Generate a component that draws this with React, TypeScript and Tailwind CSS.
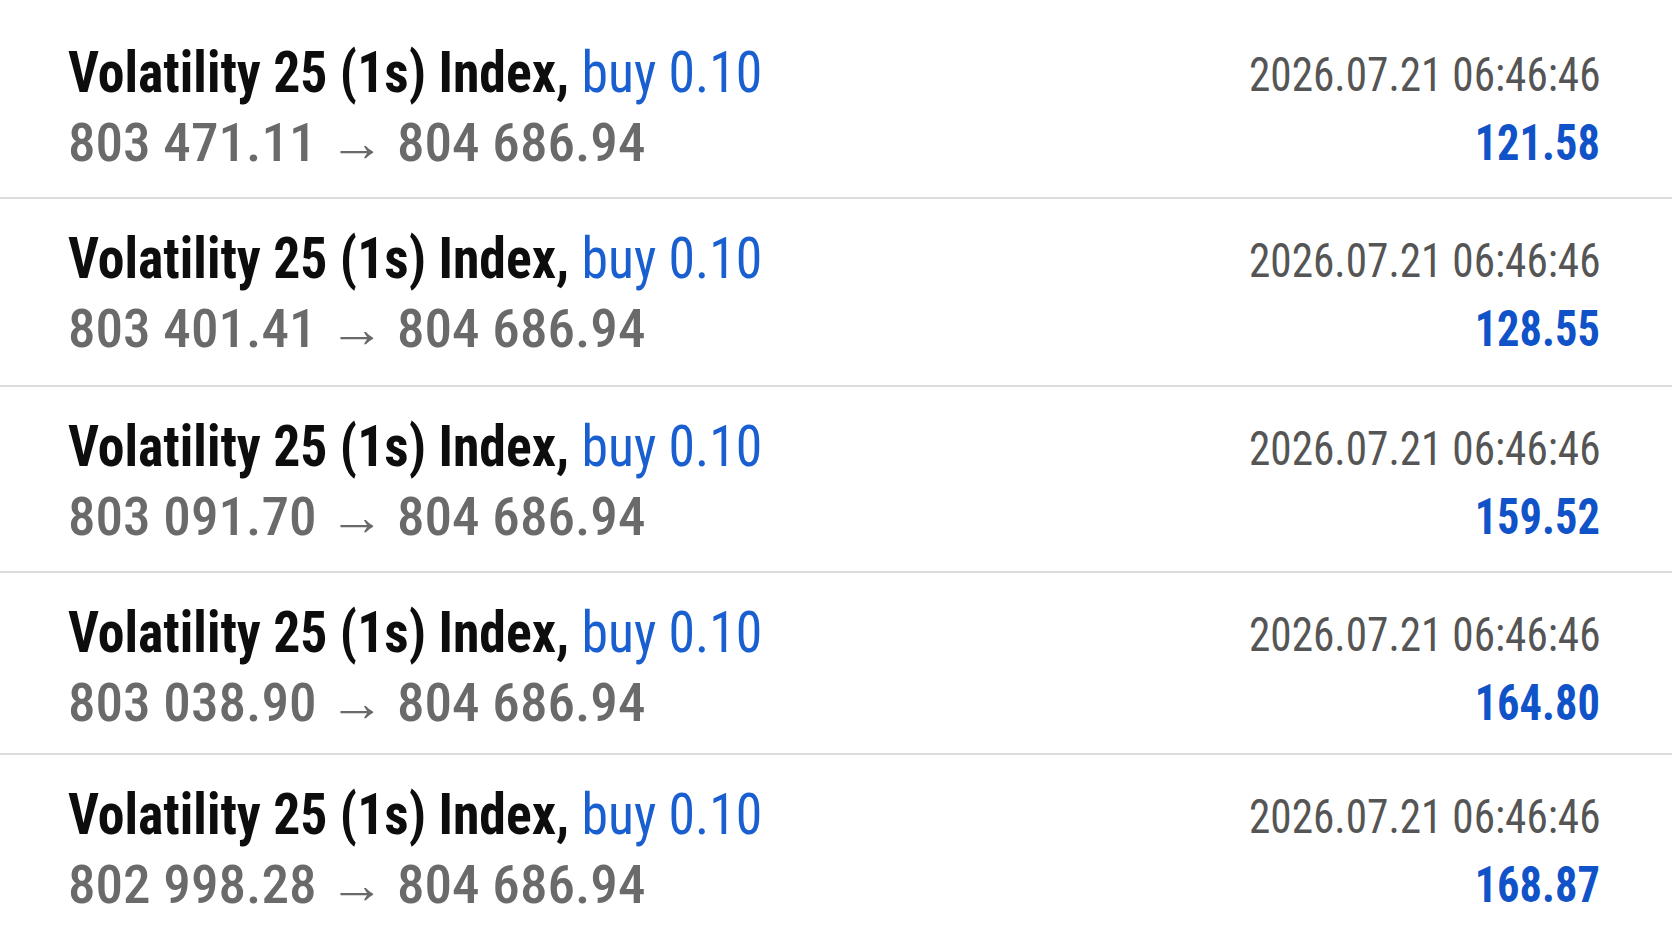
import React from "react";

const rows = [
  { open: "803 471.11", amount: "121.58", h: "h-[186px]" },
  { open: "803 401.41", amount: "128.55", h: "h-[188px]" },
  { open: "803 091.70", amount: "159.52", h: "h-[186px]" },
  { open: "803 038.90", amount: "164.80", h: "h-[182px]" },
  { open: "802 998.28", amount: "168.87", h: "h-[190px]" },
];

export default function App() {
  return (
    <div className="h-[941px] w-full overflow-hidden bg-white pt-[13px] font-['Roboto',sans-serif]">
      {rows.map((r, i) => (
        <div
          key={i}
          className={`flex ${r.h} shrink-0 justify-between border-b-2 border-[#dcdcdc] pl-[68px] pr-[72px]`}
        >
          <div className="flex flex-col pt-[26px]">
            <div className="origin-left scale-x-[0.942] whitespace-nowrap text-[57px] leading-[67px] text-[#0d0d0d] [font-stretch:75%]">
              <span className="font-bold">Volatility 25 (1s) Index, </span>
              <span className="text-[#1a5fd0]">buy 0.10</span>
            </div>
            <div className="mt-[4px] origin-left scale-x-[1.04] whitespace-nowrap text-[53px] font-[550] leading-[67px] text-[#6a6a6a] [font-stretch:75%]">
              {r.open} → 804 686.94
            </div>
          </div>
          <div className="flex flex-col items-end pt-[28px]">
            <div className="origin-right scale-x-[0.9] whitespace-nowrap text-[48px] leading-[68px] text-[#555555] [font-stretch:75%]">
              2026.07.21 06:46:46
            </div>
            <div className="mt-[1px] origin-right scale-x-[0.889] whitespace-nowrap text-[50px] font-bold leading-[67px] text-[#1052c8] [font-stretch:75%]">
              {r.amount}
            </div>
          </div>
        </div>
      ))}
    </div>
  );
}
